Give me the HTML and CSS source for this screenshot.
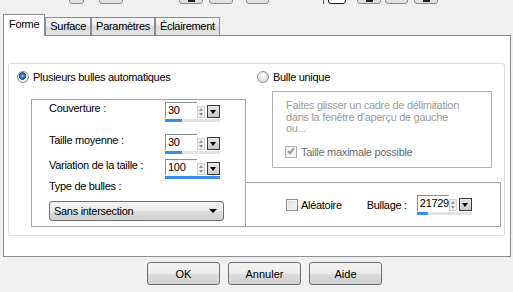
FILE: index.html
```html
<!DOCTYPE html>
<html lang="fr">
<head>
<meta charset="UTF-8" />
<title>Bulles</title>
<link rel="stylesheet" href="styles.css">
</head>
<body>
  <div class="toolbar">
    <span class="tb tb-1"></span>
    <span class="tb tb-2"></span>
    <span class="tb tb-3 has-icon"></span>
    <span class="tb tb-4"></span>
    <span class="tb tb-5"></span>
    <span class="tb-sep"></span>
    <span class="tb tb-6 dark"></span>
    <span class="tb tb-7 has-icon"></span>
    <span class="tb tb-8"></span>
    <span class="tb tb-9 has-icon"></span>
  </div>

  <div class="tabs">
    <div class="tab active">Forme</div>
    <div class="tab">Surface</div>
    <div class="tab">Paramètres</div>
    <div class="tab">Éclairement</div>
  </div>

  <div class="panel">
    <div class="group">
      <div class="col-left">
        <div class="radio-row"><span class="radio checked"></span>Plusieurs bulles automatiques</div>
        <div class="box auto-box">
          <div class="field-row row-1">
            <span class="field-label">Couverture :</span>
            <div class="spin">
              <div class="spin-main">
                <span class="spin-value">30</span>
                <span class="spin-arrows"><i class="up"></i><i class="down"></i></span>
                <span class="spin-drop"></span>
              </div>
              <div class="spin-bar"><span class="spin-fill" style="width:30%"></span></div>
            </div>
          </div>
          <div class="field-row row-2">
            <span class="field-label">Taille moyenne :</span>
            <div class="spin">
              <div class="spin-main">
                <span class="spin-value">30</span>
                <span class="spin-arrows"><i class="up"></i><i class="down"></i></span>
                <span class="spin-drop"></span>
              </div>
              <div class="spin-bar"><span class="spin-fill" style="width:30%"></span></div>
            </div>
          </div>
          <div class="field-row row-3">
            <span class="field-label">Variation de la taille :</span>
            <div class="spin">
              <div class="spin-main">
                <span class="spin-value">100</span>
                <span class="spin-arrows"><i class="up"></i><i class="down"></i></span>
                <span class="spin-drop"></span>
              </div>
              <div class="spin-bar"><span class="spin-fill" style="width:100%"></span></div>
            </div>
          </div>
          <div class="type-label">Type de bulles :</div>
          <div class="select">Sans intersection<span class="select-arrow"></span></div>
        </div>
      </div>

      <div class="col-right">
        <div class="radio-row"><span class="radio"></span>Bulle unique</div>
        <div class="box single-box">
          <p class="hint">Faites glisser un cadre de délimitation<br>dans la fenêtre d'aperçu de gauche<br>ou...</p>
          <div class="check-row disabled"><span class="check checked"></span>Taille maximale possible</div>
        </div>
        <div class="box seed-box">
          <div class="check-row"><span class="check"></span>Aléatoire</div>
          <span class="seed-label">Bullage :</span>
          <div class="spin">
            <div class="spin-main">
              <span class="spin-value">21729</span>
              <span class="spin-arrows"><i class="up"></i><i class="down"></i></span>
              <span class="spin-drop"></span>
            </div>
            <div class="spin-bar"><span class="spin-fill" style="width:20%"></span></div>
          </div>
        </div>
      </div>
    </div>
  </div>

  <div class="buttons">
    <button class="btn">OK</button>
    <button class="btn">Annuler</button>
    <button class="btn">Aide</button>
  </div>
</body>
</html>
```

FILE: styles.css
```css
/* Base */
*, *::before, *::after {
  box-sizing: border-box;
}
html, body {
  margin: 0;
  width: 513px;
  height: 292px;
  overflow: hidden;
}
body {
  background: #f0f0f0;
  font-family: "Liberation Sans", Arial, sans-serif;
  font-size: 11px;
  letter-spacing: -0.3px;
  color: #000;
}

/* Toolbar remnants at the very top */
.toolbar {
  height: 4px;
  display: flex;
  align-items: flex-end;
  overflow: hidden;
}
.tb {
  flex: none;
  position: relative;
  height: 20px;
  width: 24px;
  border: 1px solid #8e8f8f;
  border-radius: 3px;
  background: linear-gradient(#f4f4f4, #dedede);
}
.tb.has-icon::after {
  content: "";
  position: absolute;
  left: 8px;
  bottom: 1px;
  width: 7px;
  height: 3px;
  background: #222;
}
.tb.dark {
  border-color: #1a1a1a;
  background: #fff;
}
.tb-1 { margin-left: 69px; width: 15px; }
.tb-2 { margin-left: 15px; }
.tb-3 { margin-left: 56px; }
.tb-4 { margin-left: 6px; }
.tb-5 { margin-left: 13px; width: 23px; }
.tb-sep {
  flex: none;
  margin-left: 54px;
  width: 1px;
  height: 20px;
  background: #555;
}
.tb-6 { margin-left: 4px; width: 18px; }
.tb-7 { margin-left: 11px; }
.tb-8 { margin-left: 4px; width: 23px; }
.tb-9 { margin-left: 6px; }

/* Tabs */
.tabs {
  display: flex;
  align-items: flex-end;
  height: 21px;
  margin-top: 10px;
  padding-left: 3px;
}
.tab {
  height: 18px;
  padding: 0 4px;
  border: 1px solid #898c95;
  border-bottom: none;
  line-height: 16px;
  background: linear-gradient(#f5f5f5, #ebebeb 45%, #dcdcdc 50%, #e2e2e2);
}
.tab.active {
  position: relative;
  z-index: 1;
  height: 22px;
  margin-bottom: -1px;
  padding: 0 5px;
  line-height: 19px;
  background: #fff;
}

.panel {
  margin-left: 3px;
  width: 508px;
  height: 222px;
  padding: 27px 5px 0 4px;
  border: 1px solid #898c95;
  background: #fff;
}

.group {
  display: flex;
  width: 497px;
  height: 173px;
  border: 1px solid #d5dfe5;
  border-radius: 3px;
}
.col-left {
  width: 237px;
  display: flex;
  flex-direction: column;
}
.col-right {
  flex: 1;
  display: flex;
  flex-direction: column;
}

.radio-row {
  display: flex;
  align-items: center;
  gap: 4px;
  height: 14px;
  margin-top: 6px;
  padding-left: 8px;
}
.col-right .radio-row {
  padding-left: 11px;
}
.radio {
  flex: none;
  width: 12px;
  height: 12px;
  border-radius: 50%;
  border: 1px solid #8e8f8f;
  background: radial-gradient(circle at 40% 35%, #ffffff, #d4d4d4 80%);
}
.radio.checked {
  background:
    radial-gradient(circle at 45% 40%, #8fc6f5 0, #2b79d0 2px, #10427f 3.5px, transparent 4px),
    radial-gradient(circle, #f3f3f3 55%, #cfcfcf);
}

.box {
  border: 1px solid #a3a3a3;
}

/* Left automatic box */
.auto-box {
  height: 128px;
  margin: 15px 0 8px 22px;
  padding-top: 2px;
}
.field-row {
  display: flex;
  padding-left: 17px;
}
.row-1 { margin-top: 0; }
.row-2 { margin-top: 12px; }
.row-3 { margin-top: 5px; }
.field-label {
  flex: none;
  width: 116px;
  line-height: 13px;
}
.type-label {
  margin-top: 1px;
  padding-left: 17px;
  line-height: 13px;
}

/* Spinner with slider bar */
.spin {
  flex: none;
  width: 55px;
}
.spin-main {
  display: flex;
  align-items: flex-end;
  height: 16px;
}
.spin-value {
  flex: 1;
  height: 16px;
  padding-left: 2px;
  border-left: 1px solid #8d8d8d;
  border-top: 1px solid #8d8d8d;
  line-height: 15px;
  background: #fff;
  white-space: nowrap;
}
.spin-arrows {
  flex: none;
  display: flex;
  flex-direction: column;
  justify-content: space-around;
  align-items: center;
  width: 8px;
  height: 12px;
  margin-right: 2px;
  border: 1px solid #cfd3d8;
  background: #f2f2f2;
}
.spin-arrows i {
  width: 0;
  height: 0;
  border-left: 2px solid transparent;
  border-right: 2px solid transparent;
}
.spin-arrows .up { border-bottom: 3px solid #8a96a3; }
.spin-arrows .down { border-top: 3px solid #8a96a3; }
.spin-drop {
  flex: none;
  position: relative;
  width: 13px;
  height: 13px;
  border: 1px solid #3a3a3a;
  background: linear-gradient(#e6e6e6, #c9c9c9);
}
.spin-drop::after {
  content: "";
  position: absolute;
  left: 2px;
  top: 4px;
  border-left: 3px solid transparent;
  border-right: 3px solid transparent;
  border-top: 4px solid #000;
}
.spin-bar {
  height: 3px;
  margin-top: 1px;
  background: #e3e3e3;
}
.spin-fill {
  display: block;
  height: 3px;
  background: #3b8ee6;
}

.select {
  display: flex;
  align-items: center;
  justify-content: space-between;
  width: 175px;
  height: 20px;
  margin: 8px 0 0 17px;
  padding: 0 6px 0 4px;
  border: 1px solid #707070;
  border-radius: 3px;
  background: linear-gradient(#f2f2f2, #ebebeb 50%, #dddddd 51%, #cfcfcf);
}
.select-arrow {
  border-left: 4px solid transparent;
  border-right: 4px solid transparent;
  border-top: 4px solid #000;
}

/* Right single bubble box */
.single-box {
  height: 77px;
  margin: 7px 12px 0 26px;
  padding: 8px 0 0 13px;
  border-color: #b4b4b4;
}
.hint {
  margin: 0;
  line-height: 11.5px;
  color: #9c9c9c;
}
.check-row {
  display: flex;
  align-items: center;
  gap: 4px;
  height: 14px;
}
.single-box .check-row {
  margin: 10px 0 0 -1px;
}
.check-row.disabled {
  color: #6d6d6d;
}
.check {
  flex: none;
  position: relative;
  width: 12px;
  height: 12px;
  border: 1px solid #8e8f8f;
  background: linear-gradient(135deg, #d8d8d8, #f6f6f6);
  box-shadow: inset 0 0 0 1px #f4f4f4;
}
.check.checked {
  border-color: #b1b1b1;
  background: #f4f4f4;
}
.check.checked::after {
  content: "";
  position: absolute;
  left: 3px;
  top: 0;
  width: 4px;
  height: 7px;
  border-right: 2px solid #9a9a9a;
  border-bottom: 2px solid #9a9a9a;
  transform: rotate(40deg);
}

/* Seed row */
.seed-box {
  display: flex;
  align-items: center;
  height: 45px;
  margin: auto 3px 8px 0;
  padding-left: 40px;
  border-left: none;
}
.seed-box .check-row {
  gap: 3px;
}
.seed-label {
  margin-left: 25px;
  margin-right: 10px;
}

/* Dialog buttons */
.buttons {
  display: flex;
  gap: 8px;
  margin-top: 5px;
  padding-left: 147px;
}
.btn {
  width: 73px;
  height: 23px;
  padding: 0;
  border: 1px solid #707070;
  border-radius: 3px;
  font: inherit;
  color: #000;
  background: linear-gradient(#f2f2f2, #ebebeb 50%, #dddddd 51%, #cfcfcf);
}
```
